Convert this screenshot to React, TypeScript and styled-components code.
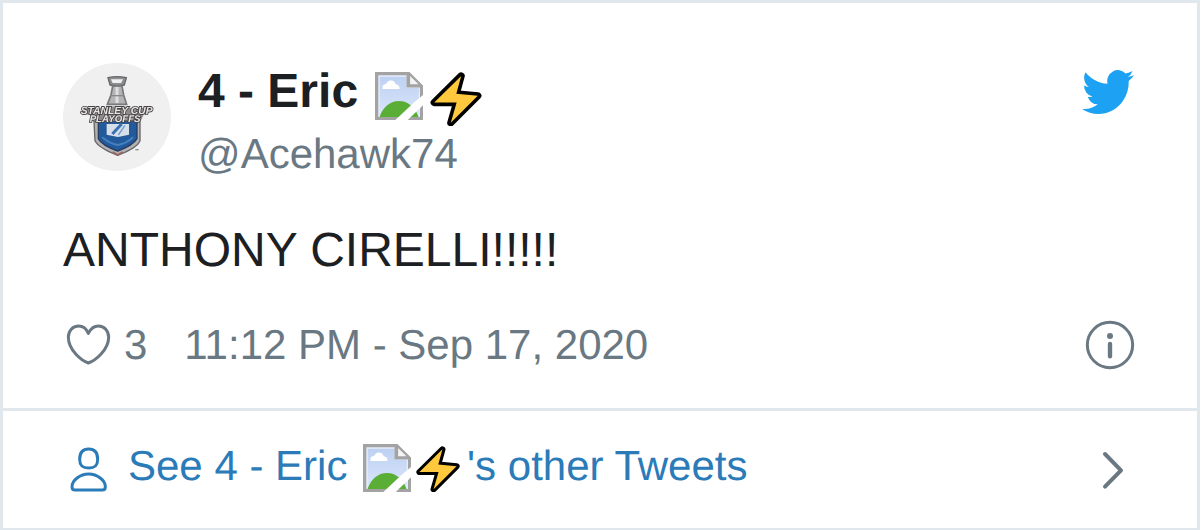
import React from 'react';
import styled, { createGlobalStyle } from 'styled-components';

const GlobalStyle = createGlobalStyle`
  *, *::before, *::after { box-sizing: border-box; }
  body {
    margin: 0;
    background: #fff;
    color: #1c2022;
    font-family: "Liberation Sans", Arial, Helvetica, sans-serif;
    text-rendering: geometricPrecision;
  }
`;

const Card = styled.article`
  margin-right: 2px;
  border: 3px solid #e1e8ed;
  border-bottom-width: 2px;
  background: #fff;
`;

const Body = styled.div`
  padding: 60px 60px 36px;
`;

const Header = styled.header`
  display: flex;
  align-items: flex-start;
  justify-content: space-between;
`;

const PlainLink = styled.a`
  display: flex;
  align-items: center;
  color: inherit;
  text-decoration: none;
`;

const Author = styled(PlainLink)`
  align-items: flex-start;
  gap: 27px;
`;

const Names = styled.span`
  display: flex;
  flex-direction: column;
`;

const Name = styled.span`
  display: flex;
  align-items: flex-start;
  padding-bottom: 4px;
  font-size: 48px;
  font-weight: 700;
  line-height: 58px;
  white-space: pre;
`;

const Handle = styled.span`
  color: #697882;
  font-size: 42px;
  line-height: 48px;
`;

const Icon = styled.svg<{ $w: number; $h?: number }>`
  display: block;
  flex: none;
  width: ${p => p.$w}px;
  height: ${p => p.$h ?? p.$w}px;
`;

const Emoji = styled.span<{ $footer?: boolean }>`
  display: flex;
  align-items: ${p => (p.$footer ? 'flex-end' : 'flex-start')};
  gap: ${p => (p.$footer ? 4 : 6)}px;
  padding: ${p => (p.$footer ? '0 6px 3px 4px' : '9px 0 0 4px')};
`;

const BirdLink = styled(PlainLink)`
  padding: 7px 3px 0 0;
`;

const Tweet = styled.p`
  margin: 43px 0 37px;
  font-size: 48px;
  line-height: 60px;
`;

const Meta = styled.div`
  display: flex;
  align-items: center;
  justify-content: space-between;
  color: #697882;
  font-size: 42px;
  line-height: 54px;
`;

const MetaGroup = styled.div`
  display: flex;
  gap: 37px;
`;

const Like = styled(PlainLink)`
  gap: 10px;
`;

const FooterWrap = styled.footer`
  border-top: 3px solid #e1e8ed;
`;

const Footer = styled(PlainLink)`
  justify-content: space-between;
  height: 117px;
  padding: 0 60px;
  color: #2b7bb9;
  font-size: 42px;
  line-height: 54px;
`;

const FooterLabel = styled.span`
  display: flex;
  align-items: center;
  gap: 14px;
`;

const FooterText = styled.span`
  display: flex;
  align-items: center;
  white-space: pre;
`;

const FooterWords = styled.span`
  padding-bottom: 7px;
`;

const Avatar = () => (
  <Icon $w={108} viewBox="39 39 324 324" aria-hidden="true">
    <defs>
      <clipPath id="round"><circle cx="201" cy="201" r="162" /></clipPath>
      <filter id="soft" x="-10%" y="-10%" width="120%" height="120%">
        <feGaussianBlur stdDeviation="1.6" />
      </filter>
    </defs>
    <g clipPath="url(#round)">
      <rect x="39" y="39" width="324" height="324" fill="#f0f0f0" />
      <g filter="url(#soft)">
        <path d="M132 214H270V272Q262 293 203 316Q145 293 135 272Z" fill="#b5b1b3" stroke="#66656b" strokeWidth="4" />
        <path d="M145 214H261V266Q250 286 203 303Q155 286 145 266Z" fill="#235a9c" stroke="#263f65" strokeWidth="4" />
        <path d="M157 262Q180 282 203 285Q228 282 249 262" fill="none" stroke="#447fc0" strokeWidth="6" />
        <path d="M170 222H237V254L204 261L170 254Z" fill="#d7e0ea" />
        <path d="M215 222L187 252" stroke="#3972b1" strokeWidth="9" />
        <path d="M225 226L205 255" stroke="#6f9bca" strokeWidth="4" />
        <path d="M174 83Q201 77 229 83L223 105Q202 110 180 105Z" fill="#8d8e90" stroke="#66676b" strokeWidth="4" />
        <path d="M183 88H219L213 99H188Z" fill="#f0f0f0" />
        <path d="M188 108H216L221 135L230 163H172L183 135Z" fill="#b4b4b6" stroke="#77787b" strokeWidth="5" />
        <path d="M201 111V159" stroke="#dedede" strokeWidth="9" />
        <path d="M182 137H221" stroke="#88898c" strokeWidth="4" />
        <path d="M98 182L112 172L164 174Q205 162 246 175L304 172L300 187L280 196L272 214H126L120 195L98 192Z" fill="#8f8a8b" />
        <text x="92" y="191" fontFamily="Liberation Sans, sans-serif" fontSize="31" fontWeight="700" fontStyle="italic" fill="#e6e3e1" stroke="#454246" strokeWidth="5" paintOrder="stroke">STANLEY CUP</text>
        <text x="119" y="216" fontFamily="Liberation Sans, sans-serif" fontSize="29" fontWeight="700" fontStyle="italic" fill="#e6e3e1" stroke="#454246" strokeWidth="5" paintOrder="stroke">PLAYOFFS</text>
        <path d="M188 306L203 315L218 306" stroke="#9b655c" strokeWidth="5" fill="none" />
        <path d="M256 299H266" stroke="#88898c" strokeWidth="4" />
      </g>
    </g>
  </Icon>
);

const BrokenImage = () => (
  <Icon $w={48} viewBox="0 0 16 16" role="img" aria-label="Lightning emblem">
    <defs>
      <linearGradient id="sky" x1="0" y1="0" x2="0" y2="1">
        <stop offset="0" stopColor="#bdd1f2" />
        <stop offset="1" stopColor="#dbe6fb" />
      </linearGradient>
    </defs>
    <path d="M0 0H11.4L16 4.6V16H0Z" fill="#a3a3a3" />
    <path d="M1.1 1.1H11L15 5V15H1.1Z" fill="#e6edfa" />
    <path d="M1.6 1.6H10.5V5.3H14.6V15H1.6Z" fill="url(#sky)" />
    <path d="M2.5 5.7V4.9Q2.6 4 3.7 4Q4.2 2.7 5.4 2.8Q6.5 2.8 6.9 4.1Q8.2 4.2 8.2 5.7Z" fill="#fff" />
    <path d="M1.5 15Q3.4 9.8 8 9.7Q12.6 9.8 14.5 15Z" fill="#5aae36" />
    <path d="M10.5 0V5.2H16V4.6L11.4 0Z" fill="#a3a3a3" />
    <path d="M11.7 1.3V4.1H14.5Z" fill="#f4f4f4" />
    <path d="M16 7.7V11.1L10.9 16H6.8L13 10.2Z" fill="#fff" />
  </Icon>
);

const Bolt = ({ size }: { size: number }) => (
  <Icon $w={size} viewBox="9 12 162 166" role="img" aria-label="High voltage">
    <path
      d="M106 24L23 106H92L74 168L157 85L91 79Z"
      fill="#ffc83d"
      stroke="#000"
      strokeWidth="22"
      strokeLinejoin="round"
      paintOrder="stroke"
    />
  </Icon>
);

const Bird = () => (
  <Icon $w={52} $h={44} viewBox="0 2.2 24 19.6" preserveAspectRatio="none" fill="#1da1f2" aria-hidden="true">
    <path d="M23.953 4.57a10 10 0 01-2.825.775 4.958 4.958 0 002.163-2.723c-.951.555-2.005.959-3.127 1.184a4.92 4.92 0 00-8.384 4.482C7.69 8.095 4.067 6.13 1.64 3.162a4.822 4.822 0 00-.666 2.475c0 1.71.87 3.213 2.188 4.096a4.904 4.904 0 01-2.228-.616v.06a4.923 4.923 0 003.946 4.827 4.996 4.996 0 01-2.212.085 4.936 4.936 0 004.604 3.417 9.867 9.867 0 01-6.102 2.105c-.39 0-.779-.023-1.17-.067a13.995 13.995 0 007.557 2.209c9.053 0 13.998-7.496 13.998-13.985 0-.21 0-.42-.015-.63A9.935 9.935 0 0024 4.59z" />
  </Icon>
);

const Heart = () => (
  <Icon $w={51} viewBox="39 28 153 153" fill="none" stroke="#697882" strokeWidth="9" strokeLinejoin="round" aria-hidden="true">
    <path d="M115 68C109 54 99 46 86 46C68 46 55 60 55 80C55 119 96 151 115 157C134 151 176 119 176 80C176 60 163 46 145 46C132 46 122 54 115 68Z" />
  </Icon>
);

const Info = () => (
  <Icon $w={54} viewBox="69 24 162 162" fill="none" stroke="#697882" aria-hidden="true">
    <circle cx="150" cy="105" r="68" strokeWidth="9" />
    <circle cx="150" cy="78" r="9" fill="#697882" stroke="none" />
    <path d="M150 102V139" strokeWidth="13" strokeLinecap="round" />
  </Icon>
);

const Person = () => (
  <Icon $w={51} viewBox="39 41 153 153" fill="none" stroke="#2b7bb9" strokeWidth="9" strokeLinejoin="round" aria-hidden="true">
    <path d="M116 56C98 56 89 68 89 87C89 106 97 113 116 113C135 113 143 106 143 87C143 68 134 56 116 56Z" />
    <path d="M116 131C90 131 66 150 66 169Q66 179 75 179H157Q166 179 166 169C166 150 142 131 116 131Z" />
  </Icon>
);

const Chevron = () => (
  <Icon $w={54} viewBox="69 36 162 162" fill="none" stroke="#697882" strokeWidth="12" strokeLinecap="round" strokeLinejoin="round" aria-hidden="true">
    <path d="M135 69L183 118L135 167" />
  </Icon>
);

export default function App() {
  return (
    <>
      <GlobalStyle />
      <Card>
        <Body>
          <Header>
            <Author href="#author">
              <Avatar />
              <Names>
                <Name>
                  {'4 - Eric '}
                  <Emoji>
                    <BrokenImage />
                    <Bolt size={54} />
                  </Emoji>
                </Name>
                <Handle>@Acehawk74</Handle>
              </Names>
            </Author>
            <BirdLink href="#tweet" aria-label="View on Twitter">
              <Bird />
            </BirdLink>
          </Header>
          <Tweet>ANTHONY CIRELLI!!!!!</Tweet>
          <Meta>
            <MetaGroup>
              <Like href="#like" aria-label="Like, 3 likes">
                <Heart />
                <span>3</span>
              </Like>
              <PlainLink href="#status">
                <time dateTime="2020-09-17T23:12">11:12 PM - Sep 17, 2020</time>
              </PlainLink>
            </MetaGroup>
            <PlainLink href="#info" aria-label="Twitter Ads info and privacy">
              <Info />
            </PlainLink>
          </Meta>
        </Body>
        <FooterWrap>
          <Footer href="#more">
            <FooterLabel>
              <Person />
              <FooterText>
                <FooterWords>{'See 4 - Eric '}</FooterWords>
                <Emoji $footer>
                  <BrokenImage />
                  <Bolt size={46} />
                </Emoji>
                <FooterWords>'s other Tweets</FooterWords>
              </FooterText>
            </FooterLabel>
            <Chevron />
          </Footer>
        </FooterWrap>
      </Card>
    </>
  );
}
